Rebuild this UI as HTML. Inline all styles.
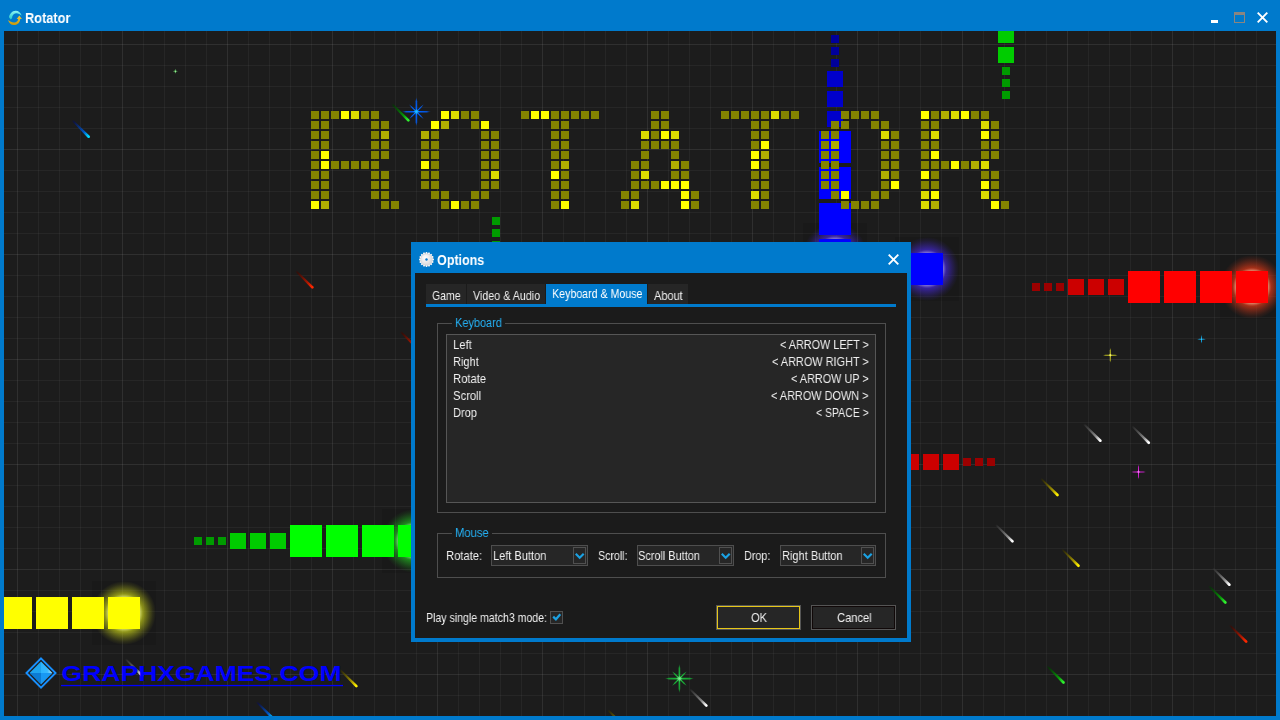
<!DOCTYPE html>
<html lang="en">
<head>
<meta charset="utf-8">
<title>Rotator</title>
<style>
*{box-sizing:border-box;margin:0;padding:0}
html,body{width:1280px;height:720px;overflow:hidden;background:#007acc}
body{position:relative;font-family:"Liberation Sans",sans-serif;font-size:13px;color:#f0f0f0;line-height:1}
.abs{position:absolute}
.t{position:absolute;will-change:transform;white-space:nowrap;transform-origin:0 0;line-height:15px;height:15px}
.tr{transform-origin:100% 0}
#titlebar{position:absolute;left:0;top:0;width:1280px;height:31px;background:#007acc}
#content{position:absolute;left:4px;top:31px;width:1272px;height:685px;background-color:#1c1c1c;overflow:hidden;
 background-image:
  linear-gradient(90deg,rgba(255,255,255,.038) 1px,transparent 1px),
  linear-gradient(180deg,rgba(255,255,255,.038) 1px,transparent 1px),
  linear-gradient(90deg,rgba(255,255,255,.045) 1px,transparent 1px),
  linear-gradient(180deg,rgba(255,255,255,.045) 1px,transparent 1px);
 background-size:105px 105px,105px 105px,21px 21px,21px 21px;
 background-position:13px 13px,13px 13px,13px 13px,13px 13px;}
svg.game{position:absolute;left:0;top:0}
.bold{font-weight:bold;font-size:14px;color:#fff}
#dlg{position:absolute;left:411px;top:242px;width:500px;height:400px;background:#007acc}
#dlgin{position:absolute;left:4px;top:31px;width:492px;height:365px;background:#1b1b1b}
.tab{position:absolute;top:284px;height:20px;background:#262626}
.tab.on{background:#007acc;color:#fff}
.grp{position:absolute;border:1px solid #4e4e4e}
.lbl{color:#25b2f6}
.combo{position:absolute;top:545px;height:21px;width:97px;border:1px solid #4e4e4e;background:#262626}
.combo i{position:absolute;right:1px;top:1px;width:13px;height:17px;border:1px solid #505050;display:block}
.btn{position:absolute;top:605px;height:25px;width:85px;border:1px solid #555;background:#262626}
.btn b{position:absolute;left:0;top:0;right:0;bottom:0;border:1px solid #100808;display:block}
</style>
</head>
<body>
<div id="titlebar">
 <svg class="abs" style="left:7px;top:10px" width="16" height="16" viewBox="0 0 16 16">
  <defs><linearGradient id="ic1" x1="0" y1="0" x2="0" y2="1"><stop offset="0" stop-color="#8ff4f4"/><stop offset="1" stop-color="#22c8c8"/></linearGradient>
  <linearGradient id="ic2" x1="0" y1="0" x2="0" y2="1"><stop offset="0" stop-color="#f0c840"/><stop offset="1" stop-color="#c89808"/></linearGradient></defs>
  <path d="M2 7.200C2.300 4.300 5 .7 8.700 .7C11.600 .7 13.900 2.800 14.700 5.800C13 4.100 11.200 3.200 9 3.300C6.800 3.400 5.100 5.500 5 8.200L3.700 9.500z" fill="url(#ic1)"/>
  <path d="M1 10C2 13 4 15 6.800 15C10.500 15 13 12.500 13.200 8.900L14.900 8.900L12.300 5.500L9.700 8.900L11.200 8.900C11 11 9.200 12.600 7 12.500C5 12.500 3 11.500 1 10z" fill="url(#ic2)"/>
 </svg>
 <span class="t bold" id="t_rot" style="left:24.95px;top:11px;transform:scaleX(0.913)">Rotator</span>
 <div class="abs" style="left:1211px;top:20px;width:7px;height:3px;background:#fff"></div>
 <div class="abs" style="left:1234px;top:12px;width:11px;height:11px;border:1px solid #8a8580;border-top-width:3px"></div>
 <svg class="abs" style="left:1257px;top:12px" width="11" height="11" viewBox="0 0 11 11"><path d="M.7.7l9.600 9.600M10.300.7L.7 10.300" stroke="#fff" stroke-width="1.900" fill="none"/></svg>
</div>

<div id="content">
<svg class="game" width="1272" height="685" viewBox="4 31 1272 685"><defs><linearGradient id="sw" gradientUnits="userSpaceOnUse" x1="-25" y1="0" x2="0" y2="0"><stop offset="0" stop-color="#3c3c3c" stop-opacity="0"/><stop offset=".12" stop-color="#3c3c3c" stop-opacity=".7"/><stop offset=".68" stop-color="#8c8c8c"/><stop offset=".93" stop-color="#ffffff"/><stop offset="1" stop-color="#ffffff"/></linearGradient><linearGradient id="sy" gradientUnits="userSpaceOnUse" x1="-25" y1="0" x2="0" y2="0"><stop offset="0" stop-color="#3a3400" stop-opacity="0"/><stop offset=".12" stop-color="#3a3400" stop-opacity=".7"/><stop offset=".68" stop-color="#a89800"/><stop offset=".93" stop-color="#fff000"/><stop offset="1" stop-color="#fff000"/></linearGradient><linearGradient id="sg" gradientUnits="userSpaceOnUse" x1="-25" y1="0" x2="0" y2="0"><stop offset="0" stop-color="#003c00" stop-opacity="0"/><stop offset=".12" stop-color="#003c00" stop-opacity=".7"/><stop offset=".68" stop-color="#089808"/><stop offset=".93" stop-color="#30f030"/><stop offset="1" stop-color="#30f030"/></linearGradient><linearGradient id="sr" gradientUnits="userSpaceOnUse" x1="-25" y1="0" x2="0" y2="0"><stop offset="0" stop-color="#400800" stop-opacity="0"/><stop offset=".12" stop-color="#400800" stop-opacity=".7"/><stop offset=".68" stop-color="#b01800"/><stop offset=".93" stop-color="#ff2800"/><stop offset="1" stop-color="#ff2800"/></linearGradient><linearGradient id="sb" gradientUnits="userSpaceOnUse" x1="-25" y1="0" x2="0" y2="0"><stop offset="0" stop-color="#0a1050" stop-opacity="0"/><stop offset=".12" stop-color="#0a1050" stop-opacity=".7"/><stop offset=".68" stop-color="#0058c8"/><stop offset=".93" stop-color="#00d8ff"/><stop offset="1" stop-color="#00d8ff"/></linearGradient><radialGradient id="pb" gradientUnits="userSpaceOnUse" cx="0" cy="0" r="15"><stop offset="0" stop-color="#20d0ff"/><stop offset=".22" stop-color="#0060ff"/><stop offset=".7" stop-color="#0060ff" stop-opacity=".8"/><stop offset="1" stop-color="#0060ff" stop-opacity=".15"/></radialGradient><radialGradient id="pg" gradientUnits="userSpaceOnUse" cx="0" cy="0" r="15"><stop offset="0" stop-color="#90f0a0"/><stop offset=".22" stop-color="#18b838"/><stop offset=".7" stop-color="#18b838" stop-opacity=".8"/><stop offset="1" stop-color="#18b838" stop-opacity=".15"/></radialGradient><radialGradient id="py" gradientUnits="userSpaceOnUse" cx="0" cy="0" r="8"><stop offset="0" stop-color="#ffff90"/><stop offset=".22" stop-color="#c8c820"/><stop offset=".7" stop-color="#c8c820" stop-opacity=".8"/><stop offset="1" stop-color="#c8c820" stop-opacity=".15"/></radialGradient><radialGradient id="pm" gradientUnits="userSpaceOnUse" cx="0" cy="0" r="8"><stop offset="0" stop-color="#ff90ff"/><stop offset=".22" stop-color="#e020e0"/><stop offset=".7" stop-color="#e020e0" stop-opacity=".8"/><stop offset="1" stop-color="#e020e0" stop-opacity=".15"/></radialGradient><radialGradient id="pc" gradientUnits="userSpaceOnUse" cx="0" cy="0" r="5"><stop offset="0" stop-color="#40d0ff"/><stop offset=".22" stop-color="#10a0dc"/><stop offset=".7" stop-color="#10a0dc" stop-opacity=".8"/><stop offset="1" stop-color="#10a0dc" stop-opacity=".15"/></radialGradient><radialGradient id="pl" gradientUnits="userSpaceOnUse" cx="0" cy="0" r="3"><stop offset="0" stop-color="#c0ffc0"/><stop offset=".22" stop-color="#60c060"/><stop offset=".7" stop-color="#60c060" stop-opacity=".8"/><stop offset="1" stop-color="#60c060" stop-opacity=".15"/></radialGradient><radialGradient id="gy"><stop offset="0" stop-color="#e4ec68" stop-opacity=".95"/><stop offset=".5" stop-color="#e4ec68" stop-opacity=".88"/><stop offset=".6" stop-color="#b8c018" stop-opacity=".72"/><stop offset=".7" stop-color="#b8c018" stop-opacity=".5"/><stop offset=".8" stop-color="#b8c018" stop-opacity=".3"/><stop offset=".9" stop-color="#b8c018" stop-opacity=".12"/><stop offset="1" stop-color="#b8c018" stop-opacity="0"/></radialGradient><radialGradient id="gr"><stop offset="0" stop-color="#ff9474" stop-opacity=".95"/><stop offset=".5" stop-color="#ff9474" stop-opacity=".88"/><stop offset=".6" stop-color="#d83818" stop-opacity=".72"/><stop offset=".7" stop-color="#d83818" stop-opacity=".5"/><stop offset=".8" stop-color="#d83818" stop-opacity=".3"/><stop offset=".9" stop-color="#d83818" stop-opacity=".12"/><stop offset="1" stop-color="#d83818" stop-opacity="0"/></radialGradient><radialGradient id="gg"><stop offset="0" stop-color="#70e870" stop-opacity=".95"/><stop offset=".5" stop-color="#70e870" stop-opacity=".88"/><stop offset=".6" stop-color="#20b020" stop-opacity=".72"/><stop offset=".7" stop-color="#20b020" stop-opacity=".5"/><stop offset=".8" stop-color="#20b020" stop-opacity=".3"/><stop offset=".9" stop-color="#20b020" stop-opacity=".12"/><stop offset="1" stop-color="#20b020" stop-opacity="0"/></radialGradient><radialGradient id="gb"><stop offset="0" stop-color="#9080f4" stop-opacity=".95"/><stop offset=".5" stop-color="#9080f4" stop-opacity=".88"/><stop offset=".6" stop-color="#4428d0" stop-opacity=".72"/><stop offset=".7" stop-color="#4428d0" stop-opacity=".5"/><stop offset=".8" stop-color="#4428d0" stop-opacity=".3"/><stop offset=".9" stop-color="#4428d0" stop-opacity=".12"/><stop offset="1" stop-color="#4428d0" stop-opacity="0"/></radialGradient></defs><rect x="92" y="581" width="64" height="64" fill="#000" opacity=".1"/><circle cx="124" cy="613" r="32" fill="url(#gy)"/><rect x="1220" y="255" width="64" height="64" fill="#000" opacity=".1"/><circle cx="1252" cy="287" r="32" fill="url(#gr)"/><rect x="382" y="509" width="64" height="64" fill="#000" opacity=".1"/><circle cx="414" cy="541" r="32" fill="url(#gg)"/><rect x="803" y="223" width="64" height="64" fill="#000" opacity=".1"/><circle cx="835" cy="255" r="32" fill="url(#gb)"/><rect x="895" y="237" width="64" height="64" fill="#000" opacity=".1"/><circle cx="927" cy="269" r="32" fill="url(#gb)"/><path fill="#00009b" d="M831 35h8v8h-8zM831 47h8v8h-8zM831 59h8v8h-8z"/><path fill="#0000cc" d="M827 71h16v16h-16zM827 91h16v16h-16zM827 111h16v16h-16z"/><path fill="#0000ff" d="M819 131h32v32h-32zM819 167h32v32h-32zM819 203h32v32h-32zM819 239h32v32h-32z"/><path fill="#838300" d="M311 111h8v8h-8zM321 111h8v8h-8zM331 111h8v8h-8zM361 111h8v8h-8zM371 111h8v8h-8zM311 121h8v8h-8zM321 121h8v8h-8zM371 121h8v8h-8zM381 121h8v8h-8zM311 131h8v8h-8zM321 131h8v8h-8zM371 131h8v8h-8zM311 141h8v8h-8zM321 141h8v8h-8zM371 141h8v8h-8zM381 141h8v8h-8zM311 151h8v8h-8zM371 151h8v8h-8zM381 151h8v8h-8zM311 161h8v8h-8zM331 161h8v8h-8zM341 161h8v8h-8zM351 161h8v8h-8zM361 161h8v8h-8zM371 161h8v8h-8zM311 171h8v8h-8zM321 171h8v8h-8zM371 171h8v8h-8zM381 171h8v8h-8zM311 181h8v8h-8zM321 181h8v8h-8zM371 181h8v8h-8zM381 181h8v8h-8zM311 191h8v8h-8zM321 191h8v8h-8zM371 191h8v8h-8zM381 191h8v8h-8zM381 201h8v8h-8zM391 201h8v8h-8zM461 111h8v8h-8zM471 111h8v8h-8zM471 121h8v8h-8zM431 131h8v8h-8zM481 131h8v8h-8zM491 131h8v8h-8zM421 141h8v8h-8zM431 141h8v8h-8zM481 141h8v8h-8zM491 141h8v8h-8zM421 151h8v8h-8zM431 151h8v8h-8zM481 151h8v8h-8zM491 151h8v8h-8zM431 161h8v8h-8zM481 161h8v8h-8zM491 161h8v8h-8zM421 171h8v8h-8zM431 171h8v8h-8zM481 171h8v8h-8zM421 181h8v8h-8zM431 181h8v8h-8zM481 181h8v8h-8zM491 181h8v8h-8zM431 191h8v8h-8zM441 191h8v8h-8zM471 191h8v8h-8zM481 191h8v8h-8zM441 201h8v8h-8zM461 201h8v8h-8zM471 201h8v8h-8zM521 111h8v8h-8zM551 111h8v8h-8zM561 111h8v8h-8zM571 111h8v8h-8zM581 111h8v8h-8zM591 111h8v8h-8zM551 121h8v8h-8zM561 121h8v8h-8zM551 131h8v8h-8zM561 131h8v8h-8zM551 141h8v8h-8zM561 141h8v8h-8zM551 151h8v8h-8zM561 151h8v8h-8zM551 161h8v8h-8zM561 171h8v8h-8zM551 181h8v8h-8zM561 181h8v8h-8zM551 191h8v8h-8zM561 191h8v8h-8zM551 201h8v8h-8zM651 111h8v8h-8zM661 111h8v8h-8zM651 121h8v8h-8zM661 121h8v8h-8zM651 131h8v8h-8zM641 141h8v8h-8zM651 141h8v8h-8zM661 141h8v8h-8zM671 141h8v8h-8zM641 151h8v8h-8zM671 151h8v8h-8zM631 161h8v8h-8zM641 161h8v8h-8zM681 161h8v8h-8zM631 171h8v8h-8zM671 171h8v8h-8zM681 171h8v8h-8zM631 181h8v8h-8zM641 181h8v8h-8zM651 181h8v8h-8zM621 191h8v8h-8zM631 191h8v8h-8zM691 191h8v8h-8zM621 201h8v8h-8zM691 201h8v8h-8zM721 111h8v8h-8zM731 111h8v8h-8zM741 111h8v8h-8zM751 111h8v8h-8zM761 111h8v8h-8zM781 111h8v8h-8zM791 111h8v8h-8zM751 121h8v8h-8zM761 121h8v8h-8zM751 131h8v8h-8zM761 131h8v8h-8zM751 141h8v8h-8zM761 161h8v8h-8zM751 171h8v8h-8zM761 171h8v8h-8zM751 181h8v8h-8zM761 181h8v8h-8zM761 191h8v8h-8zM751 201h8v8h-8zM761 201h8v8h-8zM841 111h8v8h-8zM851 111h8v8h-8zM861 111h8v8h-8zM871 111h8v8h-8zM831 121h8v8h-8zM841 121h8v8h-8zM871 121h8v8h-8zM881 121h8v8h-8zM821 131h8v8h-8zM831 131h8v8h-8zM891 131h8v8h-8zM821 141h8v8h-8zM881 141h8v8h-8zM891 141h8v8h-8zM821 151h8v8h-8zM831 151h8v8h-8zM881 151h8v8h-8zM891 151h8v8h-8zM821 161h8v8h-8zM831 161h8v8h-8zM881 161h8v8h-8zM891 161h8v8h-8zM821 171h8v8h-8zM831 171h8v8h-8zM891 171h8v8h-8zM821 181h8v8h-8zM831 181h8v8h-8zM881 181h8v8h-8zM831 191h8v8h-8zM871 191h8v8h-8zM881 191h8v8h-8zM841 201h8v8h-8zM851 201h8v8h-8zM861 201h8v8h-8zM871 201h8v8h-8zM931 111h8v8h-8zM971 111h8v8h-8zM981 111h8v8h-8zM921 121h8v8h-8zM931 121h8v8h-8zM991 121h8v8h-8zM921 131h8v8h-8zM991 131h8v8h-8zM921 141h8v8h-8zM931 141h8v8h-8zM981 141h8v8h-8zM991 141h8v8h-8zM921 151h8v8h-8zM981 151h8v8h-8zM991 151h8v8h-8zM921 161h8v8h-8zM931 161h8v8h-8zM941 161h8v8h-8zM961 161h8v8h-8zM931 171h8v8h-8zM981 171h8v8h-8zM991 171h8v8h-8zM921 181h8v8h-8zM931 181h8v8h-8zM991 181h8v8h-8zM991 191h8v8h-8zM1001 201h8v8h-8z"/><path fill="#ffff00" d="M341 111h8v8h-8zM321 151h8v8h-8zM321 161h8v8h-8zM311 201h8v8h-8zM441 111h8v8h-8zM431 121h8v8h-8zM481 121h8v8h-8zM421 161h8v8h-8zM451 201h8v8h-8zM531 111h8v8h-8zM541 111h8v8h-8zM551 171h8v8h-8zM561 201h8v8h-8zM661 131h8v8h-8zM661 181h8v8h-8zM671 181h8v8h-8zM681 181h8v8h-8zM681 191h8v8h-8zM681 201h8v8h-8zM761 141h8v8h-8zM751 151h8v8h-8zM751 161h8v8h-8zM891 181h8v8h-8zM841 191h8v8h-8zM921 111h8v8h-8zM961 111h8v8h-8zM981 131h8v8h-8zM931 151h8v8h-8zM951 161h8v8h-8zM921 171h8v8h-8zM981 181h8v8h-8zM931 191h8v8h-8zM991 201h8v8h-8z"/><path fill="#dcdc00" d="M351 111h8v8h-8zM451 111h8v8h-8zM491 171h8v8h-8zM641 131h8v8h-8zM671 131h8v8h-8zM641 171h8v8h-8zM631 201h8v8h-8zM771 111h8v8h-8zM751 191h8v8h-8zM881 131h8v8h-8zM951 111h8v8h-8zM981 121h8v8h-8zM931 131h8v8h-8zM981 161h8v8h-8zM921 191h8v8h-8zM981 191h8v8h-8zM921 201h8v8h-8z"/><path fill="#b0ae00" d="M381 131h8v8h-8zM321 201h8v8h-8zM441 121h8v8h-8zM421 131h8v8h-8zM561 161h8v8h-8zM671 161h8v8h-8zM761 151h8v8h-8zM831 141h8v8h-8zM881 171h8v8h-8zM941 111h8v8h-8zM971 161h8v8h-8zM931 201h8v8h-8z"/><path fill="#00cc00" d="M998 27h16v16h-16zM998 47h16v16h-16zM230 533h16v16h-16zM250 533h16v16h-16zM270 533h16v16h-16z"/><path fill="#009b00" d="M1002 67h8v8h-8zM1002 79h8v8h-8zM1002 91h8v8h-8zM492 217h8v8h-8zM492 229h8v8h-8zM492 241h8v8h-8zM194 537h8v8h-8zM206 537h8v8h-8zM218 537h8v8h-8z"/><path fill="#9b0000" d="M1032 283h8v8h-8zM1044 283h8v8h-8zM1056 283h8v8h-8zM963 458h8v8h-8zM975 458h8v8h-8zM987 458h8v8h-8z"/><path fill="#cc0000" d="M1068 279h16v16h-16zM1088 279h16v16h-16zM1108 279h16v16h-16zM903 454h16v16h-16zM923 454h16v16h-16zM943 454h16v16h-16z"/><path fill="#ff0000" d="M1128 271h32v32h-32zM1164 271h32v32h-32zM1200 271h32v32h-32zM1236 271h32v32h-32z"/><path fill="#00ff00" d="M290 525h32v32h-32zM326 525h32v32h-32zM362 525h32v32h-32zM398 525h32v32h-32z"/><path fill="#ffff00" d="M0 597h32v32h-32zM36 597h32v32h-32zM72 597h32v32h-32zM108 597h32v32h-32z"/><path fill="#0000ff" d="M911 253h32v32h-32z"/><path transform="translate(89.6 137.6) rotate(45)" fill="url(#sb)" d="M-25 -.8L-1.300 -1.350A1.350 1.350 0 0 1 -1.300 1.350L-25 .8z"/><path transform="translate(409.3 121.3) rotate(45)" fill="url(#sg)" d="M-25 -.8L-1.300 -1.350A1.350 1.350 0 0 1 -1.300 1.350L-25 .8z"/><path transform="translate(313.3 288.3) rotate(45)" fill="url(#sr)" d="M-25 -.8L-1.300 -1.350A1.350 1.350 0 0 1 -1.300 1.350L-25 .8z"/><path transform="translate(418 349) rotate(45)" fill="url(#sr)" d="M-25 -.8L-1.300 -1.350A1.350 1.350 0 0 1 -1.300 1.350L-25 .8z"/><path transform="translate(1101.3 441.6) rotate(45)" fill="url(#sw)" d="M-25 -.8L-1.300 -1.350A1.350 1.350 0 0 1 -1.300 1.350L-25 .8z"/><path transform="translate(1149.7 443.7) rotate(45)" fill="url(#sw)" d="M-25 -.8L-1.300 -1.350A1.350 1.350 0 0 1 -1.300 1.350L-25 .8z"/><path transform="translate(1058.4 495.9) rotate(45)" fill="url(#sy)" d="M-25 -.8L-1.300 -1.350A1.350 1.350 0 0 1 -1.300 1.350L-25 .8z"/><path transform="translate(1013.4 542.3) rotate(45)" fill="url(#sw)" d="M-25 -.8L-1.300 -1.350A1.350 1.350 0 0 1 -1.300 1.350L-25 .8z"/><path transform="translate(1079.4 566.7) rotate(45)" fill="url(#sy)" d="M-25 -.8L-1.300 -1.350A1.350 1.350 0 0 1 -1.300 1.350L-25 .8z"/><path transform="translate(1230.3 585.6) rotate(45)" fill="url(#sw)" d="M-25 -.8L-1.300 -1.350A1.350 1.350 0 0 1 -1.300 1.350L-25 .8z"/><path transform="translate(1226.3 603.4) rotate(45)" fill="url(#sg)" d="M-25 -.8L-1.300 -1.350A1.350 1.350 0 0 1 -1.300 1.350L-25 .8z"/><path transform="translate(1247.1 642.5) rotate(45)" fill="url(#sr)" d="M-25 -.8L-1.300 -1.350A1.350 1.350 0 0 1 -1.300 1.350L-25 .8z"/><path transform="translate(1064.4 683.4) rotate(45)" fill="url(#sg)" d="M-25 -.8L-1.300 -1.350A1.350 1.350 0 0 1 -1.300 1.350L-25 .8z"/><path transform="translate(707.3 706.5) rotate(45)" fill="url(#sw)" d="M-25 -.8L-1.300 -1.350A1.350 1.350 0 0 1 -1.300 1.350L-25 .8z"/><path transform="translate(357.3 687) rotate(45)" fill="url(#sy)" d="M-25 -.8L-1.300 -1.350A1.350 1.350 0 0 1 -1.300 1.350L-25 .8z"/><path transform="translate(274 719.3) rotate(45)" fill="url(#sb)" d="M-25 -.8L-1.300 -1.350A1.350 1.350 0 0 1 -1.300 1.350L-25 .8z"/><path transform="translate(143.1 676.5) rotate(45)" fill="url(#sw)" d="M-25 -.8L-1.300 -1.350A1.350 1.350 0 0 1 -1.300 1.350L-25 .8z"/><path transform="translate(625.5 727.5) rotate(45)" fill="url(#sy)" d="M-25 -.8L-1.300 -1.350A1.350 1.350 0 0 1 -1.300 1.350L-25 .8z"/><g transform="translate(416.4 111.7)" fill="url(#pb)"><path transform="rotate(0)" d="M-14.5 0L-10.5 -0.8H10.5L14.5 0L10.5 0.8H-10.5z"/><path transform="rotate(90)" d="M-14.5 0L-10.5 -0.8H10.5L14.5 0L10.5 0.8H-10.5z"/><path transform="rotate(45)" d="M-10.2 0L-6.2 -0.6H6.2L10.2 0L6.2 0.6H-6.2z"/><path transform="rotate(135)" d="M-10.2 0L-6.2 -0.6H6.2L10.2 0L6.2 0.6H-6.2z"/></g><g transform="translate(679.4 678.6)" fill="url(#pg)"><path transform="rotate(0)" d="M-14.5 0L-10.5 -0.8H10.5L14.5 0L10.5 0.8H-10.5z"/><path transform="rotate(90)" d="M-14.5 0L-10.5 -0.8H10.5L14.5 0L10.5 0.8H-10.5z"/><path transform="rotate(45)" d="M-10.2 0L-6.2 -0.6H6.2L10.2 0L6.2 0.6H-6.2z"/><path transform="rotate(135)" d="M-10.2 0L-6.2 -0.6H6.2L10.2 0L6.2 0.6H-6.2z"/></g><g transform="translate(1110.3 355.2)" fill="url(#py)"><path transform="rotate(0)" d="M-7.5 0L-5.0 -0.5H5.0L7.5 0L5.0 0.5H-5.0z"/><path transform="rotate(90)" d="M-7.5 0L-5.0 -0.5H5.0L7.5 0L5.0 0.5H-5.0z"/><circle r="1.1"/></g><g transform="translate(1138.5 471.9)" fill="url(#pm)"><path transform="rotate(0)" d="M-7.5 0L-5.0 -0.5H5.0L7.5 0L5.0 0.5H-5.0z"/><path transform="rotate(90)" d="M-7.5 0L-5.0 -0.5H5.0L7.5 0L5.0 0.5H-5.0z"/><circle r="1.1"/></g><g transform="translate(1201.5 339.2)" fill="url(#pc)"><path transform="rotate(0)" d="M-4.5 0L-2.0 -0.5H2.0L4.5 0L2.0 0.5H-2.0z"/><path transform="rotate(90)" d="M-4.5 0L-2.0 -0.5H2.0L4.5 0L2.0 0.5H-2.0z"/></g><g transform="translate(175.4 71.3)" fill="url(#pl)"><path transform="rotate(0)" d="M-2.5 0L-1.0 -0.5H1.0L2.5 0L1.0 0.5H-1.0z"/><path transform="rotate(90)" d="M-2.5 0L-1.0 -0.5H1.0L2.5 0L1.0 0.5H-1.0z"/></g></svg>
 <svg class="abs" style="left:20px;top:625px" width="34" height="34" viewBox="-17 -17 34 34">
  <defs><linearGradient id="dg" x1="0" y1="0" x2="1" y2="0"><stop offset="0" stop-color="#2cb4ff"/><stop offset=".55" stop-color="#36b8ff"/><stop offset="1" stop-color="#a8e4ff"/></linearGradient></defs>
  <path d="M0-14.550L14.550 0L0 14.550L-14.550 0z" fill="none" stroke="#1890ff" stroke-width="1.900"/>
  <path d="M0-11.400L-11.400 0H0z" fill="#1ea4ee"/><path d="M0-11.400L11.400 0H0z" fill="url(#dg)"/>
  <path d="M0 11.400L-11.400 0H0z" fill="#0c7cd4"/><path d="M0 11.400L11.400 0H0z" fill="#1898f4"/>
 </svg>
 <svg class="abs" style="left:55px;top:630px" width="290" height="30" viewBox="0 0 290 30">
  <text id="t_logo" x="2.500" y="20" font-family="Liberation Sans, sans-serif" font-weight="bold" font-size="22" fill="#0000ff" textLength="280" lengthAdjust="spacingAndGlyphs">GRAPHXGAMES.COM</text>
  <rect x="2" y="23.900" width="282" height="1.300" fill="#0000ff"/>
 </svg>
</div>

<div id="dlg">
 <svg class="abs" style="left:7px;top:9px" width="17" height="17" viewBox="-8.500 -8.500 17 17">
  <defs><radialGradient id="gear" cx=".4" cy=".35" r=".7"><stop offset="0" stop-color="#fff"/><stop offset="1" stop-color="#d4d4d8"/></radialGradient></defs>
  <g fill="url(#gear)"><circle r="6.100"/>
  <g id="teeth"><path d="M-1.400-5.300L-.65-7.450H.65L1.400-5.300z"/><path d="M-1.400-5.300L-.65-7.450H.65L1.400-5.300z" transform="rotate(22.500)"/><path d="M-1.400-5.300L-.65-7.450H.65L1.400-5.300z" transform="rotate(45)"/><path d="M-1.400-5.300L-.65-7.450H.65L1.400-5.300z" transform="rotate(67.500)"/></g>
  <g transform="rotate(90)"><path d="M-1.400-5.300L-.65-7.450H.65L1.400-5.300z"/><path d="M-1.400-5.300L-.65-7.450H.65L1.400-5.300z" transform="rotate(22.500)"/><path d="M-1.400-5.300L-.65-7.450H.65L1.400-5.300z" transform="rotate(45)"/><path d="M-1.400-5.300L-.65-7.450H.65L1.400-5.300z" transform="rotate(67.500)"/></g>
  <g transform="rotate(180)"><path d="M-1.400-5.300L-.65-7.450H.65L1.400-5.300z"/><path d="M-1.400-5.300L-.65-7.450H.65L1.400-5.300z" transform="rotate(22.500)"/><path d="M-1.400-5.300L-.65-7.450H.65L1.400-5.300z" transform="rotate(45)"/><path d="M-1.400-5.300L-.65-7.450H.65L1.400-5.300z" transform="rotate(67.500)"/></g>
  <g transform="rotate(270)"><path d="M-1.400-5.300L-.65-7.450H.65L1.400-5.300z"/><path d="M-1.400-5.300L-.65-7.450H.65L1.400-5.300z" transform="rotate(22.500)"/><path d="M-1.400-5.300L-.65-7.450H.65L1.400-5.300z" transform="rotate(45)"/><path d="M-1.400-5.300L-.65-7.450H.65L1.400-5.300z" transform="rotate(67.500)"/></g>
  </g>
  <circle r="1.200" fill="#0a78cc"/>
 </svg>
 <svg class="abs" style="left:477px;top:12px" width="11" height="11" viewBox="0 0 11 11"><path d="M.7.7l9.600 9.600M10.300.7L.7 10.300" stroke="#fff" stroke-width="1.900" fill="none"/></svg>
 <div id="dlgin"></div>
</div>

<!-- dialog controls in page coordinates -->
<span class="t bold" id="t_opt" style="left:436.95px;top:253px;transform:scaleX(0.894)">Options</span>
<div class="tab" style="left:426px;width:40px"></div>
<div class="tab" style="left:467px;width:78px"></div>
<div class="tab on" style="left:546px;width:101px"></div>
<div class="tab" style="left:648px;width:40px"></div>
<div class="abs" style="left:426px;top:304px;width:470px;height:3px;background:#007acc"></div>
<span class="t" id="t_game" style="left:432.31px;top:288px;transform:scaleX(0.8084)">Game</span>
<span class="t" id="t_va" style="left:472.91px;top:288px;transform:scaleX(0.8241)">Video &amp; Audio</span>
<span class="t" id="t_km" style="left:551.64px;top:286px;color:#fff;transform:scaleX(0.8188)">Keyboard &amp; Mouse</span>
<span class="t" id="t_about" style="left:653.55px;top:288px;transform:scaleX(0.8432)">About</span>

<div class="grp" style="left:437px;top:323px;width:449px;height:190px"></div>
<div class="abs" style="left:452px;top:323px;width:53px;height:1px;background:#1b1b1b"></div>
<span class="t lbl" id="t_kb" style="left:454.72px;top:315px;transform:scaleX(0.8424)">Keyboard</span>
<div class="abs" style="left:446px;top:334px;width:430px;height:169px;border:1px solid #565656;background:#262626"></div>
<span class="t" id="t_l1" style="left:452.83px;top:337px;transform:scaleX(0.8689)">Left</span>
<span class="t" id="t_l2" style="left:452.87px;top:354px;transform:scaleX(0.8487)">Right</span>
<span class="t" id="t_l3" style="left:452.85px;top:371px;transform:scaleX(0.8649)">Rotate</span>
<span class="t" id="t_l4" style="left:453.38px;top:388px;transform:scaleX(0.866)">Scroll</span>
<span class="t" id="t_l5" style="left:452.88px;top:405px;transform:scaleX(0.8459)">Drop</span>
<span class="t" id="t_r1" style="left:780.39px;top:337px;transform:scaleX(0.8335)">&lt; ARROW LEFT &gt;</span>
<span class="t" id="t_r2" style="left:772.4px;top:354px;transform:scaleX(0.8389)">&lt; ARROW RIGHT &gt;</span>
<span class="t" id="t_r3" style="left:791.0px;top:371px;transform:scaleX(0.8358)">&lt; ARROW UP &gt;</span>
<span class="t" id="t_r4" style="left:771.0px;top:388px;transform:scaleX(0.8384)">&lt; ARROW DOWN &gt;</span>
<span class="t" id="t_r5" style="left:816.03px;top:405px;transform:scaleX(0.8051)">&lt; SPACE &gt;</span>

<div class="grp" style="left:437px;top:533px;width:449px;height:45px"></div>
<div class="abs" style="left:452px;top:533px;width:40px;height:1px;background:#1b1b1b"></div>
<span class="t lbl" id="t_ms" style="left:454.6px;top:525px;transform:scaleX(0.8625)">Mouse</span>
<span class="t" id="t_rot2" style="left:445.96px;top:548px;transform:scaleX(0.8622)">Rotate:</span>
<div class="combo" style="left:491px"><i></i></div>
<span class="t" id="t_c1" style="left:492.87px;top:548px;transform:scaleX(0.8474)">Left Button</span>
<span class="t" id="t_scr" style="left:597.88px;top:548px;transform:scaleX(0.818)">Scroll:</span>
<div class="combo" style="left:637px"><i></i></div>
<span class="t" id="t_c2" style="left:638.33px;top:548px;transform:scaleX(0.8393)">Scroll Button</span>
<span class="t" id="t_drp" style="left:744.04px;top:548px;transform:scaleX(0.8263)">Drop:</span>
<div class="combo" style="left:780px;width:96px"><i></i></div>
<span class="t" id="t_c3" style="left:781.87px;top:548px;transform:scaleX(0.8475)">Right Button</span>
<svg class="abs" style="left:575px;top:552px" width="10" height="8" viewBox="0 0 10 8"><path d="M.7 1.700L4.700 5.700L8.700 1.700" stroke="#1ba1e2" stroke-width="2.200" fill="none"/></svg>
<svg class="abs" style="left:721px;top:552px" width="10" height="8" viewBox="0 0 10 8"><path d="M.7 1.700L4.700 5.700L8.700 1.700" stroke="#1ba1e2" stroke-width="2.200" fill="none"/></svg>
<svg class="abs" style="left:863px;top:552px" width="10" height="8" viewBox="0 0 10 8"><path d="M.7 1.700L4.700 5.700L8.700 1.700" stroke="#1ba1e2" stroke-width="2.200" fill="none"/></svg>

<span class="t" id="t_play" style="left:425.81px;top:610px;transform:scaleX(0.8128)">Play single match3 mode:</span>
<div class="abs" style="left:550px;top:611px;width:13px;height:13px;border:1px solid #505050;background:#262626"></div>
<svg class="abs" style="left:552px;top:613px" width="10" height="9" viewBox="0 0 10 9"><path d="M1.200 3.600L3.900 6.300L8.300 1.200" stroke="#1ba1e2" stroke-width="2.200" fill="none"/></svg>

<div class="btn" style="left:716px"><b style="border-color:#e6c619"></b></div>
<div class="btn" style="left:811px"><b></b></div>
<span class="t" id="t_ok" style="left:750.61px;top:610px;transform:scaleX(0.8541)">OK</span>
<span class="t" id="t_cancel" style="left:837.26px;top:610px;transform:scaleX(0.8576)">Cancel</span>
</body>
</html>
